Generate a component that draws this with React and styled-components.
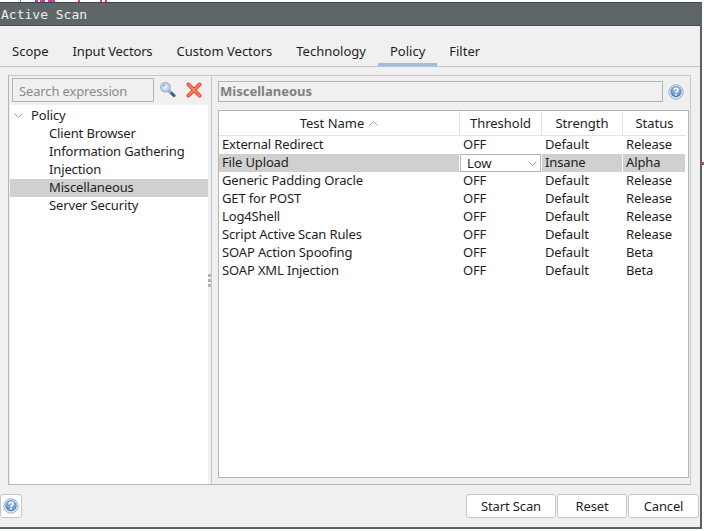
import React from 'react';
import styled, { createGlobalStyle } from 'styled-components';

const GlobalStyle = createGlobalStyle`
  html, body { margin: 0; padding: 0; background: #fff; }
  body { width: 704px; height: 531px; overflow: hidden; font-family: "Noto Sans", sans-serif; font-size: 13px; letter-spacing: -0.14px; color: #1e1e1e; }
  * { box-sizing: border-box; }
`;

const TABS = ['Scope', 'Input Vectors', 'Custom Vectors', 'Technology', 'Policy', 'Filter'];
const TREE = ['Client Browser', 'Information Gathering', 'Injection', 'Miscellaneous', 'Server Security'];
const ROWS = [
  ['External Redirect', 'OFF', 'Default', 'Release'],
  ['File Upload', 'Low', 'Insane', 'Alpha'],
  ['Generic Padding Oracle', 'OFF', 'Default', 'Release'],
  ['GET for POST', 'OFF', 'Default', 'Release'],
  ['Log4Shell', 'OFF', 'Default', 'Release'],
  ['Script Active Scan Rules', 'OFF', 'Default', 'Release'],
  ['SOAP Action Spoofing', 'OFF', 'Default', 'Beta'],
  ['SOAP XML Injection', 'OFF', 'Default', 'Beta'],
];
// bits of the window behind the dialog that stick out on top
const MARKS = [
  { left: 20, w: 1, color: '#4fa3a8' },
  { left: 14, w: 3, color: '#e0359c' },
  { left: 2, w: 5, color: '#e0359c' },
  { left: 3, w: 7, color: '#e0359c' },
  { left: 23, w: 2, color: '#e0359c' },
  { left: 20, w: 2, color: '#e0359c' },
  { left: 3, w: 2, color: '#e0359c' },
];

const HelpIcon = () => (
  <svg width="16" height="16" viewBox="0 0 16 16">
    <defs>
      <radialGradient id="helpBall" cx="50%" cy="40%" r="60%">
        <stop offset="0%" stopColor="#a9c4e8" />
        <stop offset="70%" stopColor="#6f97d0" />
        <stop offset="100%" stopColor="#3f6fb0" />
      </radialGradient>
    </defs>
    <circle cx="8" cy="8" r="7.2" fill="#dfe8f4" stroke="#7f9fcb" strokeWidth="0.8" />
    <circle cx="8" cy="7.6" r="5.6" fill="url(#helpBall)" />
    <path d="M5.9 6.1c.2-1.2 1.1-1.8 2.2-1.8 1.2 0 2.1.7 2.1 1.7 0 1.5-2.1 1.5-2.1 3" fill="none" stroke="#fff" strokeWidth="1.5" />
    <rect x="7.2" y="10" width="1.7" height="1.6" fill="#fff" />
  </svg>
);

const SearchIcon = () => (
  <svg width="17" height="17" viewBox="0 0 18 18">
    <defs>
      <radialGradient id="lens" cx="45%" cy="40%" r="60%">
        <stop offset="0%" stopColor="#f2f7fd" />
        <stop offset="100%" stopColor="#a5c4ec" />
      </radialGradient>
    </defs>
    <path d="M10.5 10.5l5.5 5" stroke="#2f5f9f" strokeWidth="3" strokeLinecap="round" />
    <path d="M10 10l2.5 2.3" stroke="#b9bdc2" strokeWidth="2.4" />
    <circle cx="6.8" cy="6.6" r="5" fill="url(#lens)" stroke="#a5adb6" strokeWidth="1.3" />
    <path d="M4.2 6c.3-1.3 1.2-2 2.5-2.1" fill="none" stroke="#5f8fd2" strokeWidth="1.1" />
  </svg>
);

const ClearIcon = () => (
  <svg width="16" height="16" viewBox="0 0 16 16">
    <path d="M2.4 2.4l11.2 11.2M13.6 2.4L2.4 13.6" stroke="#e8492c" strokeWidth="3.8" strokeLinecap="round" />
    <path d="M2.4 2.4l11.2 11.2M13.6 2.4L2.4 13.6" stroke="#fb8468" strokeWidth="1.7" strokeLinecap="round" />
  </svg>
);

const Chevron = ({ up }) => (
  <svg width="9" height="5" viewBox="0 0 9 5">
    <path d={up ? 'M.5 4.5l4-4 4 4' : 'M.5.5l4 4 4-4'} fill="none" stroke="#a0a0a0" strokeWidth="1" />
  </svg>
);

const App = () => (
  <>
    <GlobalStyle />
    <Page>
      <Backdrop>
        {MARKS.map((m, i) => (
          <Mark key={i} $left={m.left} $w={m.w} $color={m.color} />
        ))}
      </Backdrop>
      <SideTick />
      <Dialog>
        <TitleBar>Active Scan</TitleBar>
        <Body>
          <TabBar>
            {TABS.map((t) => (
              <Tab key={t} $active={t === 'Policy'} $tight={t === 'Input Vectors'}>{t}</Tab>
            ))}
          </TabBar>
          <Split>
            <LeftPane>
              <SearchRow>
                <SearchBox>Search expression</SearchBox>
                <IconSlot $w={18}><SearchIcon /></IconSlot>
                <IconSlot $w={16} $left={9}><ClearIcon /></IconSlot>
              </SearchRow>
              <Tree>
                <RootNode>
                  <TreeToggle><Chevron /></TreeToggle>
                  <span>Policy</span>
                </RootNode>
                {TREE.map((n) => (
                  <TreeNode key={n} $selected={n === 'Miscellaneous'}>{n}</TreeNode>
                ))}
              </Tree>
            </LeftPane>
            <Divider>
              <Dot /><Dot /><Dot />
            </Divider>
            <RightPane>
              <HeaderRow>
                <PanelTitle>Miscellaneous</PanelTitle>
                <HelpSlot><HelpIcon /></HelpSlot>
              </HeaderRow>
              <Table>
                <HeadRow>
                  <HeadCell>Test Name <SortMark><Chevron up /></SortMark></HeadCell>
                  <HeadCell>Threshold</HeadCell>
                  <HeadCell>Strength</HeadCell>
                  <HeadCell>Status</HeadCell>
                </HeadRow>
                {ROWS.map((r) => {
                  const selected = r[0] === 'File Upload';
                  return (
                    <Row key={r[0]}>
                      <Cell $selected={selected}>{r[0]}</Cell>
                      {selected ? (
                        <ComboCell>
                          <Combo>{r[1]}<Chevron /></Combo>
                        </ComboCell>
                      ) : (
                        <Cell>{r[1]}</Cell>
                      )}
                      <Cell $selected={selected}>{r[2]}</Cell>
                      <Cell $selected={selected}>{r[3]}</Cell>
                    </Row>
                  );
                })}
              </Table>
            </RightPane>
          </Split>
          <Footer>
            <HelpButton><HelpIcon /></HelpButton>
            <Actions>
              <Button $w={90}>Start Scan</Button>
              <Button $w={70}>Reset</Button>
              <Button $w={71}>Cancel</Button>
            </Actions>
          </Footer>
        </Body>
      </Dialog>
    </Page>
  </>
);

const Page = styled.div`
  position: relative;
  width: 704px;
  height: 531px;
  display: flex;
  flex-direction: column;
`;
const Backdrop = styled.div`
  height: 2px;
  flex: none;
  display: flex;
  background: #fff;
`;
const Mark = styled.div`
  width: ${(p) => p.$w}px;
  height: 2px;
  margin-left: ${(p) => p.$left}px;
  background: ${(p) => p.$color};
`;
const SideTick = styled.div`
  position: absolute;
  left: 702px;
  top: 162px;
  width: 2px;
  height: 3px;
  background: #e0359c;
`;
const Dialog = styled.div`
  width: 702px;
  height: 527px;
  flex: none;
  display: flex;
  flex-direction: column;
  border-top: 1px solid #3f4446;
  border-right: 2px solid #5a6163;
  border-bottom: 2px solid #5a6163;
`;
const TitleBar = styled.div`
  height: 23px;
  flex: none;
  background: #5f6668;
  color: #eceeee;
  font: 13px/23px "DejaVu Sans Mono", monospace;
  letter-spacing: 0;
  padding-left: 1px;
  border-bottom: 1px solid #474c4e;
`;
const Body = styled.div`
  flex: 1;
  min-height: 0;
  display: flex;
  flex-direction: column;
  background: #f0f0f0;
`;
const TabBar = styled.div`
  height: 41px;
  flex: none;
  display: flex;
  border-bottom: 1px solid #c4c4c4;
`;
const Tab = styled.div`
  padding: 15px 12px 0;
  line-height: 20px;
  height: 40px;
  color: #1e1e1e;
  letter-spacing: ${(p) => (p.$tight ? '-0.15px' : '0')};
  border-bottom: ${(p) => (p.$active ? '3px solid #9bbfe3' : 'none')};
`;
const Split = styled.div`
  height: 410px;
  flex: none;
  margin: 8px 9px 0 8px;
  display: flex;
  border: 1px solid #b4b4b4;
  border-top-color: #c8c8c8;
  border-right-color: #c8c8c8;
`;
const LeftPane = styled.div`
  width: 199px;
  flex: none;
  display: flex;
  flex-direction: column;
  padding-left: 1px;
`;
const SearchRow = styled.div`
  height: 29px;
  flex: none;
  display: flex;
  align-items: center;
  padding: 0 0 2px 2px;
`;
const SearchBox = styled.div`
  width: 142px;
  height: 24px;
  margin-right: 5px;
  border: 1px solid #b4b4b4;
  padding-left: 6px;
  line-height: 24px;
  color: #8a8a8a;
`;
const IconSlot = styled.div`
  width: ${(p) => p.$w}px;
  height: 18px;
  margin-left: ${(p) => p.$left || 0}px;
  display: flex;
  align-items: center;
`;
const Tree = styled.div`
  flex: 1;
  background: #fff;
  padding-top: 2px;
`;
const RootNode = styled.div`
  height: 18px;
  line-height: 16px;
  display: flex;
  align-items: flex-start;
  gap: 8px;
  padding-left: 4px;
`;
const TreeToggle = styled.span`
  display: flex;
  margin-top: 6px;
`;
const TreeNode = styled.div`
  height: 18px;
  line-height: 16px;
  padding-left: 39px;
  background: ${(p) => (p.$selected ? '#d0d0d0' : 'transparent')};
`;
const Divider = styled.div`
  width: 3px;
  flex: none;
  display: flex;
  flex-direction: column;
  justify-content: center;
  align-items: center;
  gap: 2px;
`;
const Dot = styled.div`
  width: 3px;
  height: 3px;
  background: #b0b4b8;
`;
const RightPane = styled.div`
  flex: 1;
  min-width: 0;
  border-left: 1px solid #c8c8c8;
  padding: 5px 0 6px 6px;
  display: flex;
  flex-direction: column;
`;
const HeaderRow = styled.div`
  height: 21px;
  flex: none;
  display: flex;
  align-items: center;
`;
const PanelTitle = styled.div`
  width: 445px;
  height: 21px;
  flex: none;
  border: 1px solid #b4b4b4;
  padding-left: 1px;
  line-height: 18px;
  font-weight: 700;
  letter-spacing: 0;
  color: #808080;
`;
const HelpSlot = styled.div`
  margin-left: 5px;
  display: flex;
`;
const Table = styled.div`
  flex: 1;
  margin-top: 8px;
  background: #fff;
  border: 1px solid #b4b4b4;
  margin-right: 1px;
  padding-right: 2px;
`;
const columns = '241px 82px 81px 63px';
const HeadRow = styled.div`
  display: grid;
  grid-template-columns: ${columns};
  height: 25px;
  border-bottom: 1px solid #e4e4e4;
  letter-spacing: 0;
`;
const HeadCell = styled.div`
  display: flex;
  align-items: center;
  justify-content: center;
  line-height: 24px;
  border-right: 1px solid #e4e4e4;
  &:last-child { border-right: none; }
`;
const SortMark = styled.span`
  display: inline-flex;
  margin-left: 5px;
  margin-top: 1px;
`;
const Row = styled.div`
  display: grid;
  grid-template-columns: ${columns};
  height: 18px;
`;
const Cell = styled.div`
  padding-left: 3px;
  line-height: 16px;
  height: 18px;
  background: ${(p) => (p.$selected ? '#d0d0d0' : 'transparent')};
  border-right: 1px solid #fff;
  white-space: nowrap;
`;
const ComboCell = styled.div`
  border-right: 1px solid #fff;
`;
const Combo = styled.div`
  height: 18px;
  border: 1px solid #b4b4b4;
  padding: 0 3px 0 6px;
  line-height: 15px;
  display: flex;
  align-items: center;
  justify-content: space-between;
`;
const Footer = styled.div`
  flex: 1;
  display: flex;
  justify-content: space-between;
  padding: 9px 1px 0 0;
`;
const HelpButton = styled.div`
  width: 22px;
  height: 24px;
  background: #fff;
  border: 1px solid #c8c8c8;
  border-radius: 3px;
  display: flex;
  align-items: center;
  justify-content: center;
`;
const Actions = styled.div`
  display: flex;
  gap: 1px;
`;
const Button = styled.div`
  width: ${(p) => p.$w}px;
  height: 24px;
  background: #fff;
  border: 1px solid #c8c8c8;
  border-radius: 3px;
  text-align: center;
  line-height: 22px;
`;

export default App;
